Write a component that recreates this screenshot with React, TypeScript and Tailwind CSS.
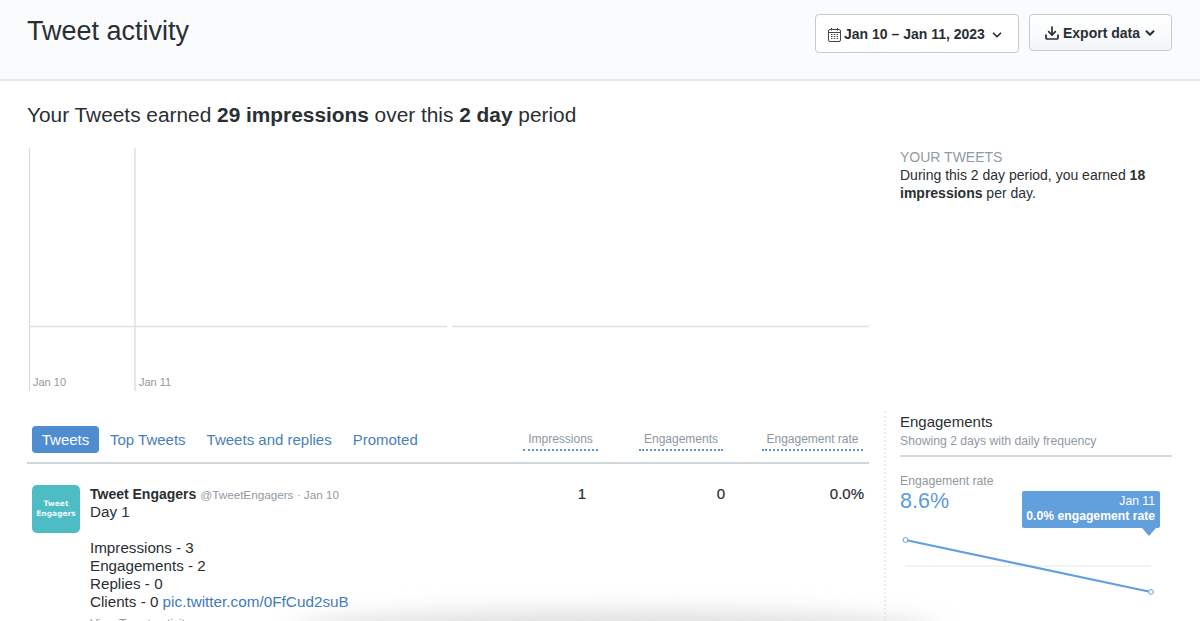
import { ChevronDown, Download } from "lucide-react";

function CalendarGlyph() {
  return (
    <svg width="13" height="14" viewBox="0 0 13 14" fill="none" stroke="#3b4650" strokeWidth="1">
      <rect x="0.5" y="1.5" width="12" height="12" rx="1.5" />
      <path d="M0.5 4.5h12M3.5 0v2.5M9.5 0v2.5" />
      <path d="M3 6.5h1.5M5.8 6.5h1.5M8.6 6.5h1.5M3 8.5h1.5M5.8 8.5h1.5M8.6 8.5h1.5M3 10.5h1.5M5.8 10.5h1.5M8.6 10.5h1.5" />
    </svg>
  );
}

function Header() {
  return (
    <header className="h-[81px] shrink-0 flex justify-between items-start bg-[#f9fbfd] border-b-2 border-[#e4e8ec] pl-[27px] pr-[28px]">
      <h1 className="mt-[14px] text-[27px] leading-[34px] text-[#292f33]">Tweet activity</h1>
      <div className="mt-[14px] flex items-start gap-[10px]">
        <button className="w-[204px] h-[39px] pl-[12px] pt-[2px] flex items-center gap-[3px] bg-white border border-[#c3cbd2] rounded-[4px] text-[14px] font-bold text-[#292f33]">
          <CalendarGlyph />
          <span>Jan 10 – Jan 11, 2023</span>
          <ChevronDown size={14} strokeWidth={3} className="ml-[2px]" />
        </button>
        <button className="w-[143px] h-[37px] pt-[1px] flex items-center justify-center gap-[3px] bg-gradient-to-b from-white to-[#f3f6f9] border border-[#c3cbd2] rounded-[4px] text-[14px] font-bold text-[#292f33]">
          <Download size={16} strokeWidth={2.6} />
          <span>Export data</span>
          <ChevronDown size={14} strokeWidth={3.5} />
        </button>
      </div>
    </header>
  );
}

function ImpressionChart() {
  return (
    <div className="relative w-[842px] h-[243px] ml-[28px]">
      <svg width="842" height="243" className="absolute inset-0">
        <path d="M1.5 0V243M107 0V243" stroke="#d5dade" strokeWidth="1.2" fill="none" />
        <path d="M1 178.5H419M424 178.5H841" stroke="#dde1e5" strokeWidth="1.5" fill="none" />
      </svg>
      <span className="absolute left-[5px] top-[228px] text-[11px] leading-[13px] text-[#8f99a3]">Jan 10</span>
      <span className="absolute left-[111px] top-[228px] text-[11px] leading-[13px] text-[#8f99a3]">Jan 11</span>
    </div>
  );
}

function MetricHead({ label, width }: { label: string; width: string }) {
  return (
    <div className={`${width} h-[20px] text-center text-[12px] leading-[17px] text-[#8d97a1] border-b-2 border-dotted border-[#5b94d6]`}>
      {label}
    </div>
  );
}

function TweetList() {
  return (
    <div className="w-[842px] ml-[27px]">
      <div className="h-[53px] flex items-start border-b-2 border-[#cfd6dc] pt-[15px]">
        <div className="flex items-center h-[27px] text-[15px] text-[#4a7fb5] ml-[5px]">
          <span className="h-[27px] w-[67px] pt-[1px] flex items-center justify-center rounded-[4px] bg-[#4f8dd0] text-white">Tweets</span>
          <span className="ml-[11px] pt-[1px]">Top Tweets</span>
          <span className="ml-[21px] pt-[1px]">Tweets and replies</span>
          <span className="ml-[21px] pt-[1px]">Promoted</span>
        </div>
        <div className="ml-auto mt-[5px] mr-[6px] flex">
          <MetricHead label="Impressions" width="w-[75px]" />
          <MetricHead label="Engagements" width="w-[84px] ml-[41px]" />
          <MetricHead label="Engagement rate" width="w-[101px] ml-[39px]" />
        </div>
      </div>
      <div className="flex pt-[21px] pl-[5px]">
        <div className="w-[48px] h-[48px] shrink-0 rounded-[5px] bg-[#4dbcc4] flex flex-col items-center justify-center text-white/90 text-[7.5px] leading-[10px] font-bold" style={{ fontFamily: '"DejaVu Sans", sans-serif' }}>
          <span>Tweet</span>
          <span>Engagers</span>
        </div>
        <div className="ml-[10px] w-[380px] text-[15.2px] leading-[18px] text-[#292f33]">
          <div className="h-[18px] whitespace-nowrap">
            <span className="font-bold text-[14px]">Tweet Engagers</span>
            <span className="text-[11.7px] text-[#8f99a3] ml-[4px]">@TweetEngagers · Jan 10</span>
          </div>
          <div>Day 1</div>
          <div className="mt-[18px]">Impressions - 3</div>
          <div>Engagements - 2</div>
          <div>Replies - 0</div>
          <div>
            Clients - 0 <span className="text-[#3f7ab8] text-[15.3px]">pic.twitter.com/0FfCud2suB</span>
          </div>
          <div className="mt-[4px] text-[12px] text-[#8f99a3]">View Tweet activity</div>
        </div>
        <div className="ml-auto flex text-[15px] leading-[18px] text-[#292f33] pr-[5px] [-webkit-text-stroke:0.2px_#292f33]">
          <span className="w-[20px] text-right mr-[119px]">1</span>
          <span className="w-[20px] text-right mr-[99px]">0</span>
          <span className="w-[40px] text-right">0.0%</span>
        </div>
      </div>
    </div>
  );
}

function EngagementPanel() {
  return (
    <aside className="ml-[15px] flex-1 h-[211px] border-l-2 border-dotted border-[#eceff2] pl-[14px] pr-[28px] pt-[2px]">
      <div className="h-[44px] border-b-2 border-[#d3dae0]">
        <div className="text-[15px] leading-[18px] text-[#292f33]">Engagements</div>
        <div className="mt-[2px] text-[12.2px] leading-[17px] text-[#8f99a3]">Showing 2 days with daily frequency</div>
      </div>
      <div className="relative mt-[16px] h-[140px]">
        <div className="text-[12.2px] leading-[16px] text-[#8f99a3]">Engagement rate</div>
        <div className="text-[21.5px] leading-[24px] text-[#5b9bdf]">8.6%</div>
        <svg width="272" height="70" className="absolute left-0 top-[62px]">
          <path d="M5.5 31H251" stroke="#dfe9f4" strokeWidth="1" />
          <path d="M5.5 5L251 57" stroke="#629fdd" strokeWidth="2.2" />
          <circle cx="5.5" cy="5" r="2.4" fill="white" stroke="#629fdd" />
          <circle cx="251" cy="57" r="2.4" fill="white" stroke="#629fdd" />
        </svg>
        <div className="absolute left-[122px] top-[18px] w-[138px] h-[37px] rounded-[2px] bg-[#629fdd] text-white text-right pr-[5px] pt-[3px] text-[12.2px] leading-[14.5px]">
          <div>Jan 11</div>
          <div className="font-bold whitespace-nowrap">0.0% engagement rate</div>
          <div className="absolute right-[4px] top-[37px] w-0 h-0 border-x-[7px] border-x-transparent border-t-[8px] border-t-[#629fdd]" />
        </div>
      </div>
    </aside>
  );
}

export default function App() {
  return (
    <div className="relative w-[1200px] h-[621px] overflow-hidden bg-white flex flex-col" style={{ fontFamily: '"Liberation Sans", Arial, sans-serif' }}>
      <Header />
      <div className="mt-[21px] ml-[27px] text-[20.85px] leading-[26px] text-[#292f33]">
        Your Tweets earned <b>29 impressions</b> over this <b>2 day</b> period
      </div>
      <div className="mt-[20px] flex">
        <ImpressionChart />
        <div className="ml-[30px] w-[260px] text-[14px] leading-[18px] text-[#292f33]">
          <div className="text-[#8f9ba6]">YOUR TWEETS</div>
          <div>
            During this 2 day period, you earned <b>18 impressions</b> per day.
          </div>
        </div>
      </div>
      <div className="mt-[20px] flex">
        <TweetList />
        <EngagementPanel />
      </div>
      <div className="absolute left-[290px] w-[650px] h-[40px] top-[612px] rounded-[50%] bg-[#dcdcdc] blur-[12px] pointer-events-none" />
    </div>
  );
}
